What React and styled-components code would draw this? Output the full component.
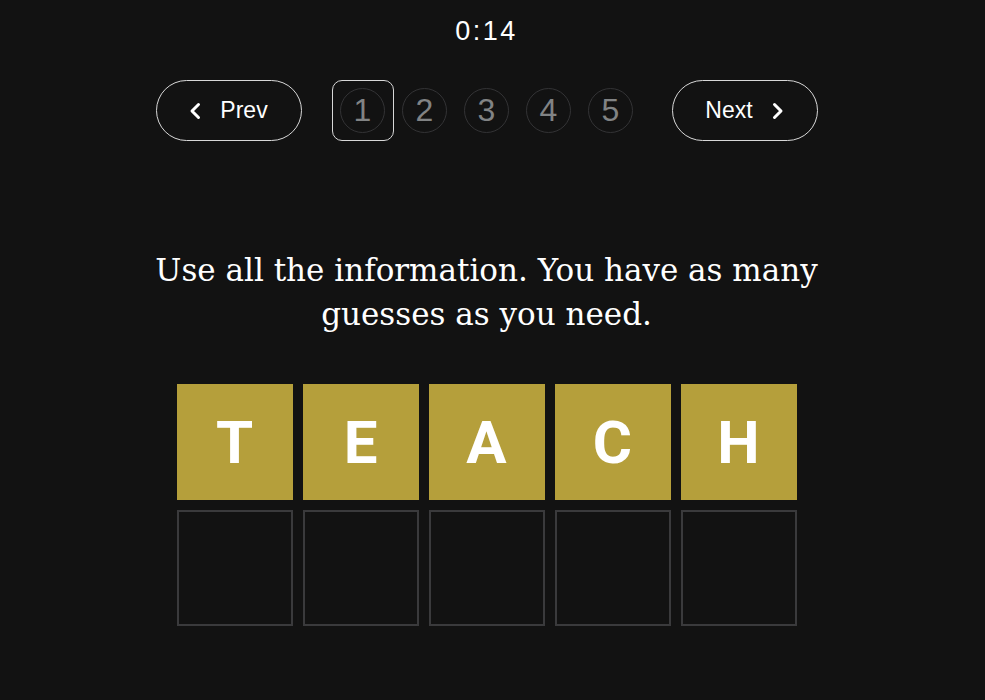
import React from 'react';
import styled, { createGlobalStyle } from 'styled-components';

const GlobalStyle = createGlobalStyle`
	html, body {
		margin: 0;
		padding: 0;
		background: #121212;
	}
	body {
		font-family: 'Liberation Sans', Arial, sans-serif;
		color: #ffffff;
	}
`;

const Page = styled.div`
	display: flex;
	flex-direction: column;
	align-items: center;
	min-height: 700px;
	padding-right: 12px;
	background: #121212;
`;

const Timer = styled.div`
	margin-top: 16px;
	font-size: 27px;
	line-height: 30px;
	letter-spacing: 2.5px;
	color: #ffffff;
`;

const Nav = styled.nav`
	display: flex;
	align-items: center;
	gap: 30px;
	margin-top: 34px;
`;

const PillButton = styled.button`
	display: flex;
	align-items: center;
	justify-content: center;
	gap: 19px;
	width: 146px;
	height: 61px;
	padding: 0;
	background: transparent;
	color: #ffffff;
	border: 1px solid #d8d8d8;
	border-radius: 31px;
	font-family: 'Liberation Sans', Arial, sans-serif;
	font-size: 23px;
	cursor: pointer;
`;

const Pages = styled.div`
	display: flex;
`;

const PageItem = styled.div`
	display: flex;
	align-items: center;
	justify-content: center;
	width: 62px;
	height: 61px;
	box-sizing: border-box;
	border: 1px solid ${({ $active }) => ($active ? '#d8d8d8' : 'transparent')};
	border-radius: 10px;
`;

const PageCircle = styled.span`
	display: flex;
	align-items: center;
	justify-content: center;
	width: 45px;
	height: 45px;
	box-sizing: border-box;
	border: 1px solid #333335;
	border-radius: 50%;
	font-size: 32px;
	color: #818384;
`;

const Prompt = styled.p`
	margin: 107px 0 0;
	width: 700px;
	text-align: center;
	font-family: 'DejaVu Serif', 'Liberation Serif', serif;
	font-size: 31px;
	line-height: 44px;
	color: #ffffff;
`;

const Board = styled.div`
	display: grid;
	grid-template-columns: repeat(5, 116px);
	grid-auto-rows: 116px;
	gap: 10px;
	margin-top: 48px;
`;

const Tile = styled.div`
	display: flex;
	align-items: center;
	justify-content: center;
	box-sizing: border-box;
	background: ${({ $filled }) => ($filled ? '#b59f3b' : 'transparent')};
	border: 2px solid ${({ $filled }) => ($filled ? '#b59f3b' : '#3a3a3c')};
	font-family: Roboto, 'Liberation Sans', Arial, sans-serif;
	font-weight: 700;
	font-size: 60px;
	color: #ffffff;
`;

function Chevron({ dir }) {
	const d = dir === 'left' ? 'M9.5 2.5L3 9l6.5 6.5' : 'M2.5 2.5L9 9l-6.5 6.5';
	return (
		<svg width="12" height="18" viewBox="0 0 12 18" fill="none" stroke="#fff" strokeWidth="3" strokeLinecap="round" strokeLinejoin="round">
			<path d={d} />
		</svg>
	);
}

const word = ['T', 'E', 'A', 'C', 'H'];

export default function App() {
	return (
		<Page>
			<GlobalStyle />
			<Timer>0:14</Timer>
			<Nav>
				<PillButton>
					<Chevron dir="left" />
					Prev
				</PillButton>
				<Pages>
					{[1, 2, 3, 4, 5].map((n) => (
						<PageItem key={n} $active={n === 1}>
							<PageCircle>{n}</PageCircle>
						</PageItem>
					))}
				</Pages>
				<PillButton>
					Next
					<Chevron dir="right" />
				</PillButton>
			</Nav>
			<Prompt>Use all the information. You have as many guesses as you need.</Prompt>
			<Board>
				{word.map((l, i) => (
					<Tile key={i} $filled>{l}</Tile>
				))}
				{word.map((_, i) => (
					<Tile key={'e' + i} />
				))}
			</Board>
		</Page>
	);
}
